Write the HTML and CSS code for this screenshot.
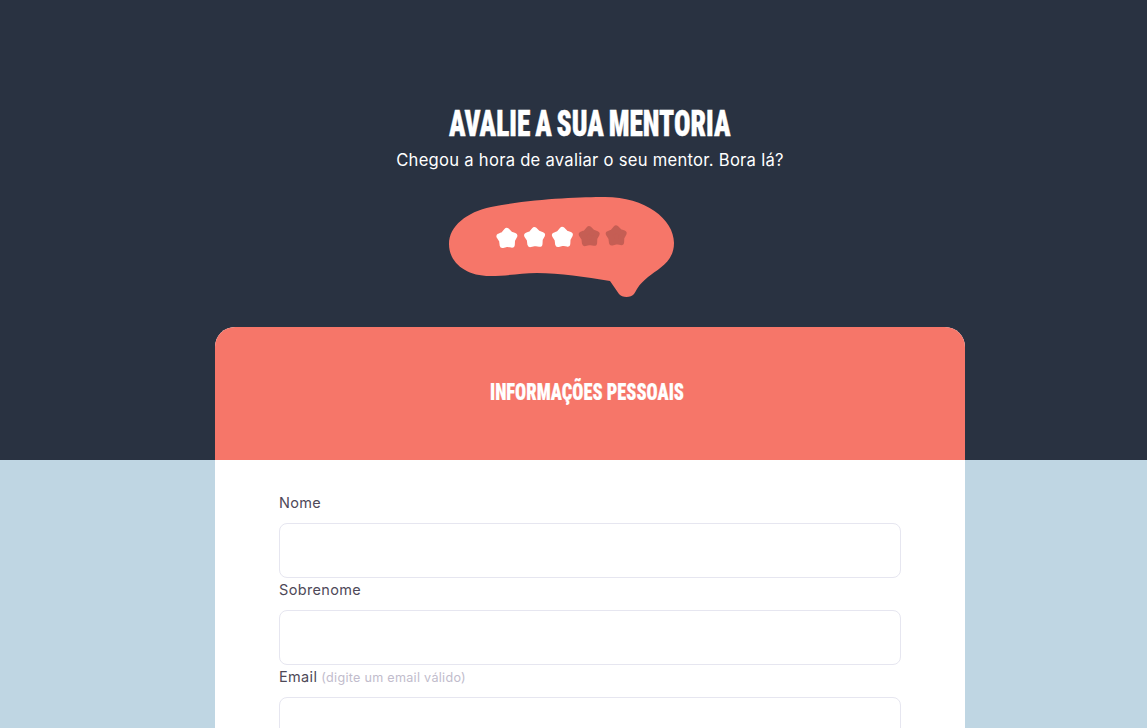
FILE: index.html
```html
<!DOCTYPE html>
<html lang="pt-BR">
<head>
<meta charset="utf-8">
<title>Avalie a sua mentoria</title>
<link rel="stylesheet" href="styles.css">
</head>
<body>
<div class="page">
  <header class="hero">
    <svg class="title" width="282" height="40" role="heading" aria-level="1"><text x="0" y="34" textLength="281.500" lengthAdjust="spacingAndGlyphs">AVALIE A SUA MENTORIA</text></svg>
    <p class="subtitle">Chegou a hora de avaliar o seu mentor. Bora lá?</p>
    <svg class="bubble" width="226" height="101" viewBox="449 197 226 101">
      <defs>
        <path id="star" d="M0-7.600 3.100-4.200 7.400-2.400 5 1.600 4.600 6.300 0 5.400-4.600 6.300-5 1.600-7.400-2.400-3.100-4.200Z"/>
      </defs>
      <path class="balloon" d="M449 244C449 226 467 212 491 207C530 199 580 197 605 197C645 197 674 219 674 243C674 262 658 269 648 277C637 286 637 290 634 294C631 298 622 298 619 294L610 281C585 277 560 273 537 273C520 273 509 276 490 276C465 276 449 262 449 244Z"/>
      <g class="star-on">
        <use href="#star" transform="translate(507 238.500) rotate(-2)"/>
        <use href="#star" transform="translate(534.700 237.700) rotate(-2)"/>
        <use href="#star" transform="translate(562.500 237.500) rotate(-2)"/>
      </g>
      <g class="star-off">
        <use href="#star" transform="translate(589.300 236.700) rotate(-2)"/>
        <use href="#star" transform="translate(616.300 236) rotate(-2)"/>
      </g>
    </svg>
  </header>
  <main class="card">
    <div class="card-head">
      <svg class="card-title" width="195" height="36" role="heading" aria-level="2"><text x="0" y="25" textLength="194" lengthAdjust="spacingAndGlyphs">INFORMAÇÕES PESSOAIS</text></svg>
    </div>
    <form class="form">
      <label class="label" for="nome">Nome</label>
      <input class="input" id="nome" type="text">
      <label class="label" for="sobrenome">Sobrenome</label>
      <input class="input" id="sobrenome" type="text">
      <label class="label" for="email">Email<span class="hint">(digite um email válido)</span></label>
      <input class="input" id="email" type="email">
    </form>
  </main>
</div>
</body>
</html>
```
FILE: styles.css
```css
* { box-sizing: border-box; margin: 0; }
body {
  height: 728px;
  overflow: hidden;
  background: #bfd6e3;
  font-family: Inter, "Open Sans", sans-serif;
}
.page {
  width: 1180px;
  height: 728px;
  overflow: hidden;
  display: flex;
  flex-direction: column;
  align-items: center;
  background: linear-gradient(#293241 460px, #bfd6e3 460px);
}
.hero {
  width: 750px;
  height: 327px;
  flex: none;
  padding-top: 102px;
  display: flex;
  flex-direction: column;
  align-items: center;
}
.title, .card-title {
  display: block;
  overflow: visible;
  font-family: Roboto, sans-serif;
  font-weight: 900;
  font-stretch: 75%;
  fill: #fff;
  stroke: #fff;
}
.title { font-size: 37px; stroke-width: .4px; word-spacing: -2px; }
.subtitle {
  margin-top: 6px;
  font-size: 16.6px;
  line-height: 24px;
  letter-spacing: .27px;
  white-space: nowrap;
  color: #fff;
}
.bubble { display: block; margin: 25px 56px 0 0; }
.balloon { fill: #f67669; }
.star-on, .star-off { stroke-width: 6px; stroke-linejoin: round; }
.star-on { fill: #fff; stroke: #fff; }
.star-off { fill: #c55e54; stroke: #c55e54; }
.card {
  width: 750px;
  height: 460px;
  flex: none;
  overflow: hidden;
  background: #fff;
  border-radius: 20px 20px 0 0;
}
.card-head {
  height: 133px;
  padding: 48px 5px 0 0;
  display: flex;
  justify-content: center;
  background: #f67669;
}
.card-title { font-size: 24px; stroke-width: .2px; }
.form {
  padding: 31px 64px 0;
  display: flex;
  flex-direction: column;
}
.label {
  height: 32px;
  display: flex;
  align-items: baseline;
  gap: 4px;
  font-size: 14.5px;
  line-height: 23px;
  letter-spacing: .35px;
  color: #4e4958;
}
.hint { font-size: 12.6px; letter-spacing: .28px; color: #c1bccc; }
.input {
  height: 55px;
  width: 100%;
  border: 1px solid #e6e6f0;
  border-radius: 8px;
  padding: 0 16px;
  background: #fff;
  font: inherit;
}
```
